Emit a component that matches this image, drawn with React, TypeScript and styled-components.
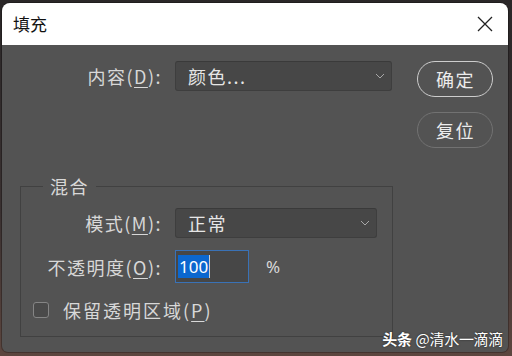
import React from "react";
import styled, { createGlobalStyle } from "styled-components";

const Global = createGlobalStyle`
  html, body { margin: 0; padding: 0; }
  body {
    width: 512px;
    height: 356px;
    overflow: hidden;
    background: linear-gradient(180deg, #2a2728 0%, #3a3131 60%, #5c463f 100%);
    font-family: "Noto Sans CJK SC", "Noto Sans", sans-serif;
  }
`;

const Page = styled.div`
  width: 512px;
  height: 356px;
  box-sizing: border-box;
  padding: 3px 4px 4px 2px;
  position: relative;
`;

const Dialog = styled.div`
  width: 506px;
  height: 349px;
  border-radius: 8px 8px 6px 6px;
  overflow: hidden;
  display: flex;
  flex-direction: column;
  background: #535353;
  box-shadow: 0 0 0 1px rgba(0, 0, 0, 0.25);
`;

const TitleBar = styled.div`
  height: 42px;
  flex: none;
  background: #ffffff;
  display: flex;
  align-items: center;
  justify-content: space-between;
  padding: 0 15px 0 11px;
`;

const Title = styled.div`
  font-size: 17px;
  color: #111;
  line-height: 1;
  margin-top: -1px;
`;

const Close = styled.div`
  width: 16px;
  height: 16px;
  display: flex;
  color: #222;
`;

const Body = styled.div`
  flex: 1;
  display: flex;
  padding: 16px 15px 0 18px;
`;

const LeftCol = styled.div`
  width: 373px;
  display: flex;
  flex-direction: column;
`;

const Row = styled.div<{ $h: number; $mt?: number }>`
  display: flex;
  align-items: center;
  height: ${(p) => p.$h}px;
  margin-top: ${(p) => p.$mt ?? 0}px;
`;

const Label = styled.div<{ $w: number }>`
  width: ${(p) => p.$w}px;
  flex: none;
  text-align: right;
  font-size: 18px;
  letter-spacing: 1.5px;
  color: #d8d8d8;
  line-height: 1;
  margin-right: 13px;
  white-space: nowrap;
  u { text-decoration-thickness: 1px; text-underline-offset: 3px; }
`;

const Select = styled.div<{ $w: number }>`
  width: ${(p) => p.$w}px;
  height: 100%;
  box-sizing: border-box;
  background: #474747;
  border: 1px solid #3e3e3e;
  border-top-color: #3a3a3a;
  border-radius: 3px;
  display: flex;
  align-items: center;
  justify-content: space-between;
  padding: 0 6px 0 12px;
  font-size: 18px;
  letter-spacing: 1.5px;
  color: #e6e6e6;
  line-height: 1;
`;

const Chevron = styled.svg`
  width: 10px;
  height: 6px;
  flex: none;
`;

const Group = styled.fieldset`
  margin: 85px 0 0 0;
  box-sizing: border-box;
  width: 373px;
  border: 1px solid #414141;
  padding: 12px 15px 18px 0;
  min-width: 0;
`;

const Legend = styled.legend`
  margin-left: 22px;
  padding: 0 7px 0 7px;
  font-size: 18px;
  letter-spacing: 1.5px;
  color: #d8d8d8;
  line-height: 20px;
`;

const NumberBox = styled.div`
  width: 74px;
  height: 100%;
  box-sizing: border-box;
  background: #474747;
  border: 1px solid #3a72b6;
  display: flex;
  align-items: center;
  padding-left: 2px;
`;

const Selected = styled.span`
  background: #0b67cf;
  color: #ffffff;
  font-family: "Noto Sans", "Noto Sans CJK SC", sans-serif;
  font-size: 17px;
  line-height: 23px;
  padding: 0 1px;
`;

const Caret = styled.span`
  width: 1px;
  height: 23px;
  background: #cfcfcf;
`;

const Unit = styled.div`
  margin-left: 17px;
  font-family: "Noto Sans", sans-serif;
  font-size: 17px;
  color: #d8d8d8;
`;

const Check = styled.div`
  width: 16px;
  height: 16px;
  box-sizing: border-box;
  border: 1px solid #858585;
  border-radius: 3px;
  background: #4a4a4a;
  margin: 0 14px 0 12px;
  flex: none;
`;

const CheckLabel = styled.div`
  font-size: 18px;
  letter-spacing: 2px;
  color: #d8d8d8;
  line-height: 1;
  u { text-decoration-thickness: 1px; text-underline-offset: 3px; }
`;

const RightCol = styled.div`
  margin-left: 24px;
  width: 76px;
  display: flex;
  flex-direction: column;
  gap: 15px;
`;

const Button = styled.div<{ $primary?: boolean }>`
  height: 36px;
  box-sizing: border-box;
  border-radius: 18px;
  border: ${(p) => (p.$primary ? "1.5px solid #cdcdcd" : "1px solid #727272")};
  display: flex;
  align-items: center;
  justify-content: center;
  font-size: 18px;
  letter-spacing: 1.5px;
  padding-left: 1px;
  color: #ececec;
  line-height: 1;
`;

const Watermark = styled.div`
  position: absolute;
  right: 9px;
  bottom: 8px;
  font-size: 15px;
  color: #ffffff;
  letter-spacing: -0.3px;
  line-height: 18px;
  text-shadow: 0 0 2px rgba(0, 0, 0, 0.6);
  b { font-weight: 700; margin-right: 4px; }
`;

const ChevronIcon = () => (
  <Chevron viewBox="0 0 10 6">
    <path d="M1 1 L5 5 L9 1" fill="none" stroke="#a8a8a8" strokeWidth="1" />
  </Chevron>
);

export default function App() {
  return (
    <>
      <Global />
      <Page>
        <Dialog>
          <TitleBar>
            <Title>填充</Title>
            <Close>
              <svg viewBox="0 0 16 16" width="16" height="16">
                <path d="M1 1 L15 15 M15 1 L1 15" stroke="#222" strokeWidth="1.3" fill="none" />
              </svg>
            </Close>
          </TitleBar>
          <Body>
            <LeftCol>
              <Row $h={30}>
                <Label $w={142}>
                  内容(<u>D</u>):
                </Label>
                <Select $w={217}>
                  颜色...
                  <ChevronIcon />
                </Select>
              </Row>
              <Group>
                <Legend>混合</Legend>
                <Row $h={30}>
                  <Label $w={141}>
                    模式(<u>M</u>):
                  </Label>
                  <Select $w={202}>
                    正常
                    <ChevronIcon />
                  </Select>
                </Row>
                <Row $h={33} $mt={12}>
                  <Label $w={141}>
                    不透明度(<u>O</u>):
                  </Label>
                  <NumberBox>
                    <Selected>100</Selected>
                    <Caret />
                  </NumberBox>
                  <Unit>%</Unit>
                </Row>
                <Row $h={16} $mt={19}>
                  <Check />
                  <CheckLabel>
                    保留透明区域(<u>P</u>)
                  </CheckLabel>
                </Row>
              </Group>
            </LeftCol>
            <RightCol>
              <Button $primary>确定</Button>
              <Button>复位</Button>
            </RightCol>
          </Body>
        </Dialog>
        <Watermark>
          <b>头条</b>@清水一滴滴
        </Watermark>
      </Page>
    </>
  );
}
